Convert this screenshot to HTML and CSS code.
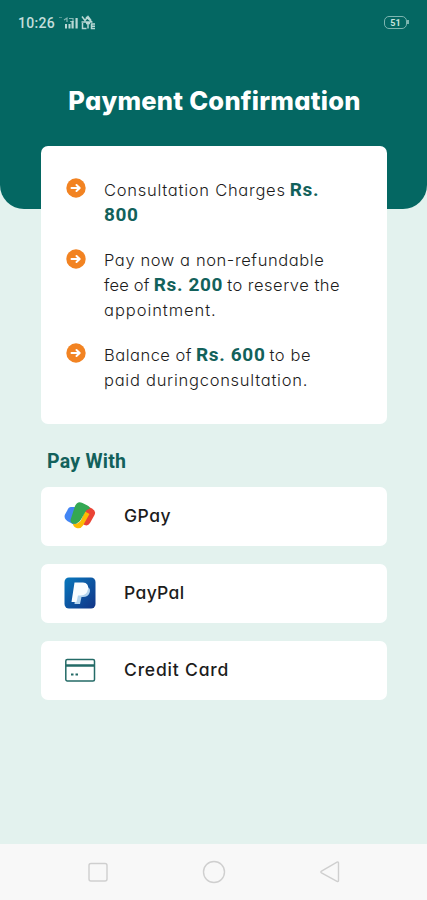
FILE: index.html
```html
<!DOCTYPE html>
<html lang="en">
<head>
<meta charset="utf-8">
<meta name="viewport" content="width=device-width, initial-scale=1">
<title>Payment Confirmation</title>
<link rel="stylesheet" href="styles.css">
</head>
<body>
<div class="screen">
  <header class="hero">
    <div class="status">
      <span class="clock">10:26</span>
      <svg class="signal" width="38" height="18" viewBox="0 0 38 18" fill="#b9d8d5">
        <path d="M1 3h3v1H1z" opacity=".4"/>
        <path d="M7 10h2v4.500H7zM10.500 10h2v4.500h-2zM13.500 7h2.200v7.500h-2.200zM17.500 4h2.200v10.500h-2.200z"/>
        <path d="M6 6l3-2v4M11 4.500h4v3h-3" fill="none" stroke="#b9d8d5" stroke-width="1.200" opacity=".7"/>
        <path d="M24 2.500l3 4 3-4 3 4M28 3l6 5M24.500 9v5.500h4M28 9.500h4M30 9.500v5M37 10h-3.500v4.500H37M33 12.200h4M23.500 8h11" fill="none" stroke="#b9d8d5" stroke-width="1.500"/>
      </svg>
      <span class="battery"><span class="level">51</span></span>
    </div>
    <h1 class="title">Payment Confirmation</h1>
  </header>

  <main class="content">
    <ul class="card">
      <li class="item">
        <svg class="bullet" viewBox="0 0 20 20"><circle cx="10" cy="10" r="9.700"/><path d="M5.500 10h8M10.500 7l3.200 3-3.200 3"/></svg>
        <div class="text">
          <div class="line"><span class="wider">Consultation Charges</span> <b>Rs.</b></div>
          <div class="line"><b>800</b></div>
        </div>
      </li>
      <li class="item">
        <svg class="bullet" viewBox="0 0 20 20"><circle cx="10" cy="10" r="9.700"/><path d="M5.500 10h8M10.500 7l3.200 3-3.200 3"/></svg>
        <div class="text">
          <div class="line"><span class="wide">Pay now a non-refundable</span></div>
          <div class="line"><span class="snug">fee of</span> <b>Rs. 200</b> <span>to reserve the</span></div>
          <div class="line"><span class="widest">appointment.</span></div>
        </div>
      </li>
      <li class="item">
        <svg class="bullet" viewBox="0 0 20 20"><circle cx="10" cy="10" r="9.700"/><path d="M5.500 10h8M10.500 7l3.200 3-3.200 3"/></svg>
        <div class="text">
          <div class="line"><span>Balance of</span> <b>Rs. 600</b> <span class="wide">to be</span></div>
          <div class="line"><span class="wider">paid duringconsultation.</span></div>
        </div>
      </li>
    </ul>

    <h2 class="heading">Pay With</h2>

    <div class="methods">
      <button class="method">
        <svg class="logo" viewBox="0 0 34 34">
          <path d="M24 7l5 2.500q4.500 2.500 2.500 6.500l-4.500 8q-2 3.500-5.500 2l-4-2z" fill="#ea4335"/>
          <path d="M8 8h9l-4 19-6-3.500q-7-3-5-8L4.500 11q1-3 3.500-3z" fill="#4285f4"/>
          <path d="M22 12.500l4.500 2.500-6.500 11.500q-2.500 3.800-6.500 2.500-3.500-1.200-3.500-4.500 6 1 8.500-4z" fill="#fbbc04"/>
          <path d="M12 7q2.500-5.500 7.500-3l5 2.500q3 1.500 2 3.500-2.500-.3-4 2.500l-4.500 8q-3 5-8.500 4-3-1.500-1.500-5z" fill="#34a853"/>
        </svg>
        <span class="gpay">GPay</span>
      </button>
      <button class="method">
        <svg class="logo" viewBox="0 0 34 34">
          <defs><linearGradient id="pp" x1="0" y1="0" x2="1" y2="1"><stop offset="0" stop-color="#0878bd"/><stop offset="1" stop-color="#123487"/></linearGradient></defs>
          <rect x="1.500" y="1.500" width="31" height="31" rx="4.500" fill="url(#pp)"/>
          <path d="M13 11h12q3 2 1.500 6-1.500 4-6.500 4h-1.500l-1.500 7h-5.500z" fill="#b4d4ee"/>
          <path d="M11.500 6.500h8.500q6 .5 5 6.500-1 6-7 6.500h-3l-1.500 6.500H8.500z" fill="#f8fcff"/>
        </svg>
        <span class="paypal">PayPal</span>
      </button>
      <button class="method">
        <svg class="logo" viewBox="0 0 34 34" fill="none" stroke="#246b67" stroke-width="1.500">
          <rect x="2.800" y="6.500" width="28.700" height="21.500" rx="1.500"/>
          <path d="M3 12.500h28" stroke-width="2.500"/>
          <path d="M8 21.500h2.500M12.500 21.500h2.500" stroke-width="2"/>
        </svg>
        <span class="credit">Credit Card</span>
      </button>
    </div>
  </main>

  <nav class="navbar">
    <svg viewBox="0 0 24 24"><rect x="3" y="3.500" width="18" height="17.500" rx="2"/></svg>
    <svg viewBox="0 0 24 24"><circle cx="12" cy="12" r="10.500"/></svg>
    <svg viewBox="0 0 24 24"><path d="M20.500 3v17.500q0 1.500-1.500.8L3.500 12.800q-1.300-.8 0-1.600L19 2.200q1.500-.7 1.500.8z"/></svg>
  </nav>
</div>
</body>
</html>
```
FILE: styles.css
```css
* { box-sizing: border-box; }
body { margin: 0; }

.screen {
  display: flex;
  flex-direction: column;
  height: 900px;
  background: #e3f2ee;
  font-family: Inter, "Open Sans", sans-serif;
  font-feature-settings: "cv11" 1;
  color: #1c1c1c;
}

.hero {
  height: 209px;
  flex: none;
  background: #046762;
  border-radius: 0 0 24px 24px;
}

.status {
  display: flex;
  align-items: center;
  height: 44px;
  padding: 1px 18px 0;
}
.clock {
  font: 500 14px/20px Roboto, sans-serif;
  letter-spacing: 0.3px;
  color: #c3dedb;
}
.signal { margin-left: 3px; }
.battery {
  position: relative;
  display: flex;
  align-items: center;
  justify-content: center;
  width: 23px;
  height: 13px;
  margin-left: auto;
  margin-right: 2px;
  border: 1.500px solid #7db5b0;
  border-radius: 5px;
}
.battery::after {
  content: "";
  position: absolute;
  right: -3px;
  top: 3px;
  width: 2px;
  height: 4px;
  background: #7db5b0;
}
.level { font: 700 9px/10px Roboto, sans-serif; color: #c6e2dc; }

.title {
  margin: 39px 0 0 2px;
  text-align: center;
  font-size: 25.500px;
  line-height: 36px;
  font-weight: 800;
  letter-spacing: 0.250px;
  white-space: nowrap;
  color: #fff;
}

.content {
  flex: 1;
  margin-top: -63px;
  padding: 0 40px 0 41px;
}

.card {
  display: flex;
  flex-direction: column;
  gap: 20.500px;
  height: 278px;
  margin: 0;
  padding: 32px 0 0 25px;
  list-style: none;
  background: #fff;
  border-radius: 7px;
}
.item { display: flex; gap: 18px; }
.bullet { width: 20px; height: 20px; flex: none; }
.item:nth-child(2) .bullet { margin-top: 1px; }
.bullet circle { fill: #f28322; }
.bullet path {
  fill: none;
  stroke: #fff;
  stroke-width: 2;
  stroke-linecap: round;
  stroke-linejoin: round;
}
.line {
  display: flex;
  align-items: baseline;
  gap: 4px;
  height: 24.800px;
  line-height: 24.800px;
  font-size: 16.500px;
  font-weight: 300;
  letter-spacing: 0.500px;
  white-space: nowrap;
}
.snug { letter-spacing: 0.200px; }
.wide { letter-spacing: 0.600px; }
.wider { letter-spacing: 0.740px; }
.widest { letter-spacing: 0.950px; }
.line b {
  font-family: Roboto, sans-serif;
  font-weight: 700;
  font-size: 19px;
  letter-spacing: 0.650px;
  color: #12615b;
}

.heading {
  margin: 26px 0 0 6px;
  font: 700 19.500px/24px Roboto, sans-serif;
  letter-spacing: 0.250px;
  color: #12615b;
}

.methods {
  display: grid;
  gap: 18px;
  margin-top: 13px;
}
.method {
  display: flex;
  align-items: center;
  gap: 27px;
  height: 59px;
  padding: 0 22px 1px;
  border: 0;
  border-radius: 7px;
  background: #fff;
  font: 500 17.500px/24px Inter, sans-serif;
  font-feature-settings: "cv11" 1;
  color: #1c1c1c;
}
.logo { width: 34px; height: 34px; }
.gpay { letter-spacing: 0.500px; }
.paypal { letter-spacing: 0.350px; }
.credit { letter-spacing: 0.800px; }

.navbar {
  display: flex;
  justify-content: space-between;
  align-items: center;
  height: 56px;
  padding: 0 85px 0 86px;
  background: #f8f8f8;
}
.navbar svg {
  width: 24px;
  height: 24px;
  fill: none;
  stroke: #cfcfcf;
  stroke-width: 1.400;
}
```
